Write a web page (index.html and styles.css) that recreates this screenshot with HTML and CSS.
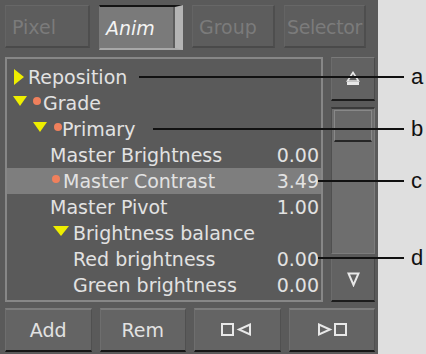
FILE: index.html
```html
<!DOCTYPE html>
<html lang="en">
<head>
  <meta charset="UTF-8">
  <title>Anim Channel Editor</title>
  <link rel="stylesheet" href="styles.css">
</head>
<body>
  <div class="stage">
    <div class="panel">
      <div class="tabs">
        <div class="tab">Pixel</div>
        <div class="tab active">Anim</div>
        <div class="tab">Group</div>
        <div class="tab tight">Selector</div>
      </div>

      <div class="main">
        <div class="list">
          <div class="row in-repo"><span class="tri-right"></span><span class="name gap-4">Reposition</span></div>
          <div class="row in-grade"><span class="tri-down"></span><span class="dot gap-6"></span><span class="name gap-2">Grade</span></div>
          <div class="row in-primary"><span class="tri-down"></span><span class="dot gap-7"></span><span class="name">Primary</span></div>
          <div class="row in-param"><span class="name">Master Brightness</span><span class="val">0.00</span></div>
          <div class="row in-dot sel"><span class="dot"></span><span class="name gap-3">Master Contrast</span><span class="val">3.49</span></div>
          <div class="row in-param"><span class="name">Master Pivot</span><span class="val">1.00</span></div>
          <div class="row in-bal"><span class="tri-down wide"></span><span class="name gap-4">Brightness balance</span></div>
          <div class="row in-sub"><span class="name">Red brightness</span><span class="val">0.00</span></div>
          <div class="row in-sub"><span class="name">Green brightness</span><span class="val">0.00</span></div>
        </div>

        <div class="scroll">
          <div class="sbtn">
            <svg width="14" height="16" viewBox="0 0 14 16"><polygon points="7,1.5 12.5,10 1.5,10" fill="none" stroke="#e8e8e8" stroke-width="1.6"/><rect x="1" y="11" width="12" height="3" fill="#e8e8e8"/></svg>
          </div>
          <div class="track"><div class="thumb"></div></div>
          <div class="sbtn">
            <svg width="13" height="15" viewBox="0 0 13 15"><polygon points="1.5,1.5 11.5,1.5 6.5,13" fill="none" stroke="#e8e8e8" stroke-width="2"/></svg>
          </div>
        </div>
      </div>

      <div class="buttons">
        <div class="btn">Add</div>
        <div class="btn">Rem</div>
        <div class="btn">
          <svg width="32" height="14" viewBox="0 0 32 14"><rect x="1" y="1" width="11" height="11" fill="none" stroke="#e8e8e8" stroke-width="2"/><polygon points="29,1.5 29,11.5 18,6.5" fill="none" stroke="#e8e8e8" stroke-width="2"/></svg>
        </div>
        <div class="btn">
          <svg width="32" height="14" viewBox="0 0 32 14"><polygon points="3,1.5 3,11.5 14,6.5" fill="none" stroke="#e8e8e8" stroke-width="2"/><rect x="19" y="1" width="11" height="11" fill="none" stroke="#e8e8e8" stroke-width="2"/></svg>
        </div>
      </div>
    </div>

    <!-- callout labels -->
    <div class="callout co-a"><span class="line"></span><span class="letter">a</span></div>
    <div class="callout co-b"><span class="line"></span><span class="letter">b</span></div>
    <div class="callout co-c"><span class="line"></span><span class="letter">c</span></div>
    <div class="callout co-d"><span class="line"></span><span class="letter">d</span></div>
  </div>
</body>
</html>
```

FILE: styles.css
```css
/* Reset */
* {
  margin: 0;
  padding: 0;
  box-sizing: border-box;
}
body {
  background: #dfdfdf;
  font-family: 'DejaVu Sans', sans-serif;
  font-size: 19px;
}

.stage {
  position: relative;
  width: 426px;
  height: 354px;
}

/* Panel */
.panel {
  width: 378px;
  height: 354px;
  background: #5a5a5a;
  padding: 5px 3px 0 5px;
}

/* Tabs */
.tabs {
  display: grid;
  grid-template-columns: 85px 84px 83px 82px;
  column-gap: 9px;
  height: 45px;
  margin-bottom: 7px;
}
.tab {
  height: 43px;
  line-height: 38px;
  padding: 2px 0 0 6px;
  color: #7b7b7b;
  background: #5d5d5d;
  border-top: 1px solid #676767;
  border-left: 1px solid #646464;
  border-bottom: 2px solid #4a4a4a;
  border-right: 2px solid #4e4e4e;
  white-space: nowrap;
  overflow: hidden;
}
.tab.tight {
  padding-left: 2px;
  letter-spacing: -0.4px;
}
.tab.active {
  height: 45px;
  color: #f4f4f4;
  font-style: italic;
  background: #7a7a7a;
  border-top: 2px solid #141414;
  border-left: 1px solid #7a7a7a;
  border-bottom: 2px solid #a8a8a8;
  border-right: 8px solid #b4b4b4;
  box-shadow: inset -2px 0 #5c5c5c;
}

/* Main area */
.main {
  display: flex;
  gap: 8px;
  height: 245px;
}
.list {
  width: 318px;
  border: 2px solid #878787;
  padding-top: 5px;
}
.row {
  display: flex;
  align-items: center;
  height: 26px;
  padding-right: 2px;
  color: #e2e2e2;
  white-space: nowrap;
}
.row.sel {
  background: #7e7e7e;
}
.val {
  margin-left: auto;
}

.in-repo { padding-left: 7px; }
.in-grade { padding-left: 6px; }
.in-primary { padding-left: 26px; }
.in-param { padding-left: 43px; }
.in-dot { padding-left: 45px; }
.in-bal { padding-left: 46px; }
.in-sub { padding-left: 66px; }

.gap-2 { margin-left: 2px; }
.gap-3 { margin-left: 3px; }
.gap-4 { margin-left: 4px; }
.gap-6 { margin-left: 6px; }
.gap-7 { margin-left: 7px; }

.tri-right {
  width: 0;
  height: 0;
  border-top: 8px solid transparent;
  border-bottom: 8px solid transparent;
  border-left: 10px solid #eeee00;
}
.tri-down {
  width: 0;
  height: 0;
  margin-top: -4px;
  border-left: 7px solid transparent;
  border-right: 7px solid transparent;
  border-top: 10px solid #eeee00;
}
.tri-down.wide {
  border-left-width: 8px;
  border-right-width: 8px;
}
.dot {
  width: 8px;
  height: 8px;
  margin-top: -4px;
  border-radius: 50%;
  background: #f0805c;
}

/* Scroll column */
.scroll {
  width: 44px;
  display: flex;
  flex-direction: column;
}
.sbtn {
  height: 44px;
  display: flex;
  align-items: center;
  justify-content: center;
  background: #626262;
  border-top: 1px solid #7a7a7a;
  border-left: 1px solid #6c6c6c;
  border-right: 1px solid #4a4a4a;
  border-bottom: 2px solid #1c1c1c;
}
.track {
  flex: 1;
  margin: 6px 0 4px;
  background: #6e6e6e;
  border-top: 2px solid #3a3a3a;
  border-left: 1px solid #505050;
  border-right: 1px solid #7c7c7c;
  border-bottom: 1px solid #7c7c7c;
  padding: 1px 2px;
}
.thumb {
  height: 32px;
  background: #686868;
  border: 1px solid #888;
  border-bottom: 2px solid #262626;
}

/* Bottom buttons */
.buttons {
  display: grid;
  grid-template-columns: repeat(4, 1fr);
  column-gap: 8px;
  margin-top: 6px;
}
.btn {
  height: 44px;
  display: flex;
  align-items: center;
  justify-content: center;
  color: #e2e2e2;
  background: #646464;
  border-top: 2px solid #7c7c7c;
  border-left: 1px solid #6e6e6e;
  border-right: 1px solid #505050;
  border-bottom: 2px solid #151515;
}

/* Callouts */
.callout {
  position: absolute;
  display: flex;
  align-items: center;
  height: 26px;
  font-family: 'Liberation Sans', Arial, sans-serif;
  font-size: 22px;
  color: #111;
}
.callout .line {
  height: 2px;
  background: #111;
}
.callout .letter {
  margin-left: 7px;
}
.co-a { top: 64px; left: 139px; }
.co-a .line { width: 265px; }
.co-b { top: 116px; left: 153px; }
.co-b .line { width: 251px; }
.co-c { top: 168px; left: 318px; }
.co-c .line { width: 86px; }
.co-d { top: 245px; left: 318px; }
.co-d .line { width: 86px; }
```
